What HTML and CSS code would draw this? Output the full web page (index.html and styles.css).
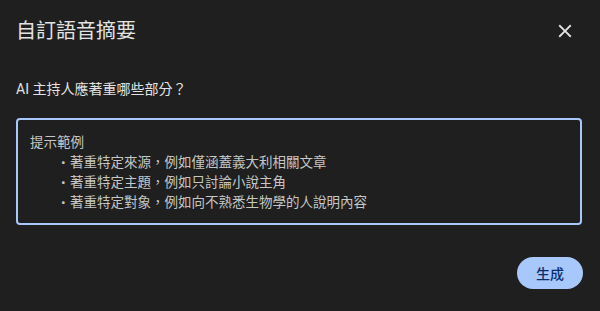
FILE: index.html
```html
<!DOCTYPE html>
<html lang="zh-Hant">
<head>
<meta charset="utf-8">
<link rel="stylesheet" href="styles.css">
</head>
<body>
<div class="dialog">
  <div class="header">
    <h1 class="title">自訂語音摘要</h1>
    <button class="close" aria-label="關閉">
      <svg viewBox="0 0 24 24" width="22" height="22"><path fill="currentColor" d="M19 6.41L17.59 5 12 10.59 6.41 5 5 6.41 10.59 12 5 17.59 6.41 19 12 13.41 17.59 19 19 17.59 13.41 12z"/></svg>
    </button>
  </div>
  <p class="question">AI 主持人應著重哪些部分？</p>
  <div class="box">
    <div class="line">提示範例</div>
    <div class="item"><span class="dot">•</span>著重特定來源，例如僅涵蓋義大利相關文章</div>
    <div class="item"><span class="dot">•</span>著重特定主題，例如只討論小說主角</div>
    <div class="item"><span class="dot">•</span>著重特定對象，例如向不熟悉生物學的人說明內容</div>
  </div>
  <div class="actions">
    <button class="primary">生成</button>
  </div>
</div>
</body>
</html>
```
FILE: styles.css
```css
html, body {
  margin: 0;
  background: #1f1f1f;
}
body {
  font-family: "Roboto", "Noto Sans CJK TC", sans-serif;
  color: #e3e3e3;
  width: 600px;
  height: 311px;
  overflow: hidden;
  text-spacing-trim: space-all;
}
.dialog {
  padding: 16px 18px 0 16px;
}
.header {
  display: flex;
  align-items: center;
  justify-content: space-between;
  height: 30px;
}
.title {
  margin: 0;
  font-size: 20px;
  font-weight: 400;
  line-height: 30px;
  color: #e3e3e3;
}
.close {
  background: none;
  border: 0;
  padding: 0;
  margin-right: 6px;
  width: 22px;
  height: 22px;
  color: #e3e3e3;
  display: flex;
}
.question {
  margin: 33px 0 0 0;
  font-size: 14px;
  line-height: 20px;
  color: #e3e3e3;
}
.box {
  margin-top: 19px;
  border: 2px solid #a8c7fa;
  border-radius: 4px;
  padding: 12px 12px 11px 12px;
  font-size: 13.5px;
  line-height: 20px;
  color: #c4c7c5;
  height: 80px;
}
.item {
  display: flex;
  padding-left: 31px;
}
.dot {
  width: 9px;
  flex: none;
}
.actions {
  display: flex;
  justify-content: flex-end;
  margin-top: 32px;
}
.primary {
  font-family: "Roboto", "Noto Sans CJK TC", sans-serif;
  background: #a8c7fa;
  color: #062e6f;
  border: 0;
  border-radius: 16px;
  width: 66px;
  height: 32px;
  font-size: 14px;
  font-weight: 500;
  margin-right: -1px;
}
```
